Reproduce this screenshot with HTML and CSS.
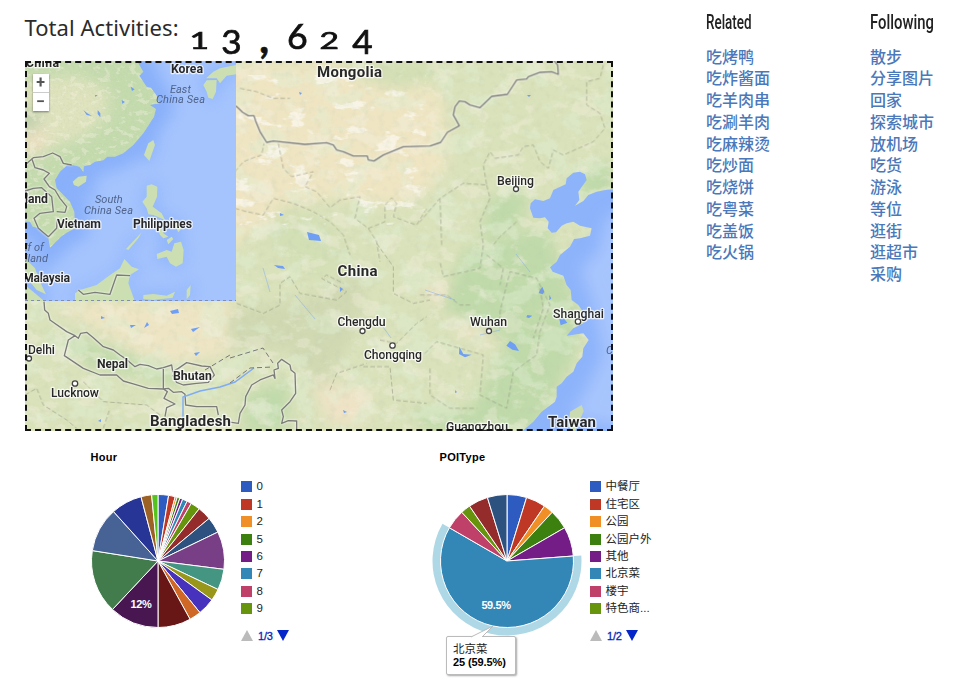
FILE: index.html
```
<!DOCTYPE html>
<html lang="zh">
<head>
<meta charset="utf-8">
<title>Activities</title>
<link rel="stylesheet" href="styles.css">
</head>
<body>
<div class="page">
  <main class="main">
    <header class="total">
      <h1 class="total-label">Total Activities:</h1>
      <div class="counter"><span class="digit one">1</span><span class="digit low">3</span><span class="digit comma">,</span><span class="digit tall">6</span><span class="digit small">2</span><span class="digit low">4</span></div>
    </header>
    <section class="map">
      <svg class="map-svg" viewBox="25 61 588 370" width="588" height="370">
        <defs>
          <filter id="blotch" x="0" y="0" width="100%" height="100%"><feTurbulence type="fractalNoise" baseFrequency=".035 .045" numOctaves="5" seed="8"/><feColorMatrix values="0 0 0 0 .75 0 0 0 0 .86 0 0 0 0 .66 8 0 0 0 -4.2"/></filter>
          <filter id="sand" x="0" y="0" width="100%" height="100%"><feTurbulence type="fractalNoise" baseFrequency=".04 .06" numOctaves="5" seed="21"/><feColorMatrix values="0 0 0 0 .93 0 0 0 0 .89 0 0 0 0 .76 0 9 0 0 -5"/></filter>
          <filter id="pale" x="0" y="0" width="100%" height="100%"><feTurbulence type="fractalNoise" baseFrequency=".035 .07" numOctaves="4" seed="5"/><feColorMatrix values="0 0 0 0 .97 0 0 0 0 .95 0 0 0 0 .88 0 12 0 0 -7.4"/></filter>
          <filter id="relief" x="0" y="0" width="100%" height="100%"><feTurbulence type="fractalNoise" baseFrequency=".14" numOctaves="3" seed="3"/><feColorMatrix values="0 0 0 0 .5 0 0 0 0 .56 0 0 0 0 .4 3 0 0 0 -1.4"/></filter>
          <filter id="soft" x="-20%" y="-20%" width="140%" height="140%"><feGaussianBlur stdDeviation="7"/></filter>
          <filter id="shore" x="-20%" y="-20%" width="140%" height="140%"><feGaussianBlur stdDeviation="22"/></filter>
          <clipPath id="main"><path d="M25 61H613V431H25Z"/></clipPath>
          <clipPath id="inset"><path d="M25 61H236V301H25Z"/></clipPath>
          <path id="mainland" d="M0 0L350 16 370 50 358 62 380 95 393 98 405 115 412 125 417 145 390 150 408 162 402 185 383 215 370 235 340 270 310 295 285 305 262 305 250 316 225 320 210 330 192 334 190 350 178 335 145 327 120 350 105 375 110 400 130 420 150 440 163 470 165 520 140 533 123 545 90 578 85 550 60 520 38 515 30 500 0 500Z"/>
          <path id="isles" d="M158 380L175 365 200 362 198 380 175 395 162 390ZM400 255L405 270 388 318 372 300 385 265ZM380 392L395 388 412 395 411 425 398 455 425 475 435 495 400 480 385 478 380 460 367 440 380 425ZM412 520L425 515 430 535 445 545 430 550 420 540ZM450 500L470 498 485 520 475 532 465 510 455 520ZM440 555L455 545 460 552 445 568ZM410 597L440 585 455 590 463 565 483 560 491 585 488 625 468 635 450 625 440 605 412 612ZM318 582L365 532 355 550 325 585ZM165 715L180 705 230 690 270 660 300 640 313 612 335 635 357 643 330 660 325 685 345 740 165 740ZM15 610L45 640 60 680 78 718 50 705 30 680 15 665ZM15 690L45 715 75 740H15ZM370 720L400 717 440 722 465 710 458 728 400 735 370 732ZM500 705L512 690 510 720 500 733ZM550 90L560 76 590 75 588 110 578 132 565 128 560 110ZM558 70L580 50 600 40 648 30V58L620 62 600 85 590 70Z"/>
        </defs>
        <g clip-path="url(#main)">
          <path fill="#dae2bb" d="M25 61H613V431H25Z"/>
          <g filter="url(#soft)">
            <path fill="#efe5c3" d="M220 61H340L440 90 450 145 440 180 400 205 330 197 290 205 220 255Z"/>
            <path fill="#eee5c4" d="M45 302L236 300 225 330 230 355 160 365 100 330Z"/>
            <path fill="#efe3c6" d="M310 380L370 390 365 425 330 425ZM422 282L455 285 500 330 480 345 440 310Z"/>
            <path fill="#c0daaa" d="M465 250L545 225 580 315 575 355 535 431 430 431 410 410 470 410 510 340 440 310ZM490 200L530 185 520 225 480 240ZM245 395L290 380 285 431 245 431ZM45 330L110 350 180 370 180 385 90 365ZM570 180L613 160V195L585 200Z"/>
            <path fill="#c8cfa9" opacity=".5" d="M230 310L310 300 370 260 355 335 320 390 290 350 230 350Z"/>
            <path fill="#d3dfb5" d="M340 61H430L440 80 400 90 360 80ZM280 205L330 225 350 260 310 280 265 240Z"/>
          </g>
          <rect x="25" y="61" width="588" height="370" filter="url(#blotch)" opacity=".42"/>
          <rect x="25" y="61" width="588" height="370" filter="url(#sand)" opacity=".32"/>
          <rect x="236" y="75" width="190" height="150" filter="url(#pale)" opacity=".7"/>
          <rect x="25" y="61" width="588" height="370" filter="url(#relief)" opacity=".15"/>
          <g transform="translate(420 55) scale(.33333)">
            <path fill="#8db3fb" d="M600 402L560 404 530 410 505 420 490 438 465 452 478 435 475 410 500 375 495 358 480 350 460 353 440 370 437 388 400 405 390 430 370 438 345 433 332 445 330 460 340 488 360 490 375 487 386 500 383 520 395 533 408 532 425 512 440 505 460 500 480 512 515 520 510 542 480 550 462 552 450 575 420 600 410 620 390 637 398 650 430 662 440 690 452 705 455 735 475 750 492 775 490 805 460 820 440 842 470 838 490 835 506 855 490 880 487 905 470 925 460 950 440 965 425 985 410 995 410 1025 405 1040 365 1070 340 1100 305 1130H600Z"/>
            <path fill="#a7c5fd" filter="url(#shore)" d="M640 450L560 490 535 590 480 640 520 750 550 900 500 1000 450 1080 640 1130Z"/>
            <path fill="#cadbb1" d="M485 1050L491 1068 465 1130 445 1115 450 1070Z"/>
            <g fill="#6e9ff5"><path d="M360 705l7-10 6 15-5 8-12-4ZM418 793l12-5 12 15-20 8ZM270 858l15 10 12 20-20-4-18-12ZM322 780l15 2-10 7-8-2ZM118 875l12 22 25 2-20 8-18-10ZM388 720l6 10-6 6ZM105 1005l6 6-5 4Z"/></g>
          </g>
          <g class="borders">
            <path transform="translate(230 55) scale(.33333)" d="M0 142L20 155 38 172 55 182 72 182 77 198 90 230 110 262 130 258 225 268 290 263 310 270 320 285 340 290 370 303 412 303 415 315 432 318 460 300 520 275 600 273 632 262 652 232 688 212 670 180 675 155 688 138 705 140 720 150 750 158 785 124 832 118 860 75 890 72 895 65 930 52 965 50 985 58 983 30 970 15"/>
            <path transform="translate(20 295) scale(.33333)" d="M72 20L74 45 85 55 90 75 140 110 165 122 175 130 182 115 200 112 220 128 250 155 280 165 300 180 315 190 345 215 360 208 385 212 410 222 430 218 455 210 458 230 475 220 500 203 545 213 570 215 583 240 565 262 530 265 490 270 470 262 458 240M165 122L145 135 133 182 190 220 240 240 290 240 310 258 345 268 385 280 430 282 430 222M430 282L445 280 460 292 485 290 495 298 497 330 530 335 590 335 595 360M430 282L442 290 432 310 465 327 440 338 435 365"/>
            <path transform="translate(230 240) scale(.33333)" d="M-10 545L25 550 30 520 45 495 47 470 65 435 90 420 130 405 135 415 132 390 145 385 143 370 155 358 180 375 183 390 195 400 197 460 180 485 155 510 160 530 155 550 175 542 200 543 200 570"/>
          </g>
          <g class="provinces">
            <path transform="translate(230 55) scale(.33333)" d="M15 350L40 320 70 308 95 300 102 265M145 265L160 340 185 365 250 350 225 395 260 410 300 458 330 435 390 425 375 490 415 520 440 510 465 500 465 450 485 428 500 445 490 485 530 500 560 510 590 460M15 460L50 470 100 480 130 430 190 445 250 470 300 500 340 540 360 600M30 100L80 110 130 130 180 130M415 520L440 560 450 620"/>
            <path transform="translate(420 55) scale(.33333)" d="M550 30L540 70 500 80 500 150 540 175 555 220 520 260 430 300 400 285 385 340 360 320 340 270 310 275 295 300 225 310 210 290 190 330 200 390 130 385 60 430 0 500M60 430L65 570M200 390L210 430 180 500 190 570 180 640 70 665 60 620M290 500L240 545 220 570M200 600L250 640 240 690M240 820L240 770 270 650 350 670 390 750 360 830 350 900 280 950 260 1060 180 1020 190 900 50 860 10 900M0 720L80 720 120 750 150 750M30 940L30 1020 90 1060 170 1060M360 700L370 760 340 850"/>
            <path transform="translate(230 240) scale(.33333)" d="M20 190L100 220 150 195 150 130 180 110 210 160 320 180 350 155 275 115 290 105 340 130M440 10L490 80 490 160 550 190 600 180M400 380L480 380 490 480 590 490M300 450L320 400 410 370M450 300L500 310 560 250 590 230"/>
            <path transform="translate(20 295) scale(.33333)" d="M15 300L50 280 70 330 140 375 170 400M190 260L250 320 380 330 420 360M250 400L270 340"/>
          </g>
          <path class="river" d="M183 420V397L200 391 220 387 235 382 254 368"/>
          <path class="river thin" d="M263 268L270 292M295 295L315 319M378 320L391 338M516 254L530 272M425 290L455 300M480 335L500 330"/>
          <path fill="#6e9ff5" d="M307 232l12 3 2 6-12-1ZM274 265l9 1 2 3-7-1ZM280 213l4 2-4 1ZM299 92l3 1-2 2ZM101 316l4 2-4 1ZM130 325l6 0-5 3ZM147 322l2 3-5 3ZM170 311l8-2 1 4-7 1ZM191 329l9-2-7 5ZM194 353l6-1-4 4ZM98 421l3-2v3ZM343 410l4 2-3 1ZM340 287l3 2-3 3ZM527 95l4 0-2 2Z"/>
          <path class="disputed" d="M230 358L263 348 273 363M230 383L250 368 273 367M205 370L230 355"/>
        </g>
        <g clip-path="url(#inset)">
          <path fill="#a5c4fd" d="M25 61H236V301H25Z"/>
          <g transform="translate(20 55) scale(.33333)">
            <g fill="none" stroke="#82abf9" stroke-width="80" opacity=".8" filter="url(#shore)"><use href="#mainland"/><use href="#isles" stroke-width="14"/></g>
            <use href="#mainland" fill="#c4dbae"/><use href="#isles" fill="#cbdfb3"/>
            <clipPath id="landclip"><use href="#mainland"/></clipPath>
            <g clip-path="url(#landclip)">
              <g filter="url(#shore)"><path fill="#dfe3be" d="M0 80L170 60 270 110 260 190 180 250 90 280 0 290Z"/><path fill="#efe1c4" d="M10 240L75 220 85 270 45 310 0 290Z"/><path fill="#bbcdaa" d="M0 170L60 160 60 215 0 230Z"/></g>
              <rect width="650" height="600" filter="url(#sand)" opacity=".35"/><rect width="650" height="600" filter="url(#relief)" opacity=".14"/>
              <path fill="#6e9ff5" d="M190 165l12 10 14 8-16-3ZM233 165l8 10 0 12-8-10ZM305 135l10 6-8 5ZM332 95l12 8-8 5ZM225 120l8 0-7 6Z"/>
            </g>
          </g>
          <g class="borders"><path transform="translate(20 55) scale(.33333)" d="M15 330L40 308 70 305 98 294 120 305 130 325 155 330M35 310L45 338 70 345 88 355 72 372 88 395 105 405 120 430 140 455 135 472 110 470M15 408L40 400 65 398 95 425 100 470 60 475 42 490 55 520 85 545 110 520 112 490M175 705L190 718 225 712 270 718 290 660 330 662"/></g>
        </g>
        <path d="M25 300.500H236" stroke="#858bab" stroke-dasharray="3 3"/>
        <g class="labels">
          <g class="country">
            <text x="26" y="66.500" textLength="33">China</text><text x="171" y="73" textLength="32">Korea</text>
            <text x="317" y="76.500" textLength="65" class="large">Mongolia</text><text x="337.500" y="276" textLength="40" class="large">China</text>
            <text x="25" y="202.500" textLength="23">land</text><text x="57" y="228" textLength="44">Vietnam</text><text x="133" y="228" textLength="59">Philippines</text><text x="23" y="282" textLength="47">Malaysia</text>
            <text x="97" y="368" textLength="31">Nepal</text><text x="173" y="380" textLength="39">Bhutan</text>
            <text x="150" y="425.500" textLength="81" class="large">Bangladesh</text><text x="548" y="426.500" textLength="48" class="large">Taiwan</text>
          </g>
          <g class="city">
            <text x="497" y="184.500" textLength="37">Beijing</text><text x="337.500" y="326" textLength="48">Chengdu</text><text x="364" y="359" textLength="58">Chongqing</text>
            <text x="470" y="326" textLength="37">Wuhan</text><text x="553" y="318" textLength="51">Shanghai</text><text x="446" y="431" textLength="62">Guangzhou</text>
            <text x="28" y="354" textLength="27">Delhi</text><text x="51" y="397" textLength="48">Lucknow</text>
          </g>
          <g class="sea"><text x="170" y="92.500">East</text><text x="156" y="102.500" textLength="49">China Sea</text><text x="95" y="203">South</text><text x="84" y="214" textLength="49">China Sea</text><text x="25" y="251">lf of</text><text x="25" y="261.500">iland</text><text x="606" y="354">C</text></g>
          <g class="dots"><circle cx="516" cy="189" r="2.500"/><circle cx="362.500" cy="331" r="2.500"/><circle cx="392.500" cy="345.500" r="2.700"/><circle cx="489" cy="331" r="2.500"/><circle cx="578" cy="321.500" r="2.700"/><circle cx="29" cy="358.500" r="2.500"/><circle cx="75" cy="383.500" r="2.700"/></g>
        </g>
      </svg>
      <div class="zoom"><button class="zoom-btn">+</button><button class="zoom-btn">−</button></div>
    </section>
    <section class="charts">
      <div class="chart">
        <h2 class="chart-title">Hour</h2>
        <div class="chart-body"><svg class="pie" data-pie="hour" viewBox="-80 -80 160 160" width="160" height="160"></svg>
          <div class="legend"><ul class="legend-list" data-legend="hour"></ul><div class="pager"><i class="up"></i><span>1/3</span><i class="down"></i></div></div></div>
      </div>
      <div class="chart">
        <h2 class="chart-title">POIType</h2>
        <div class="chart-body"><svg class="pie" data-pie="poi" viewBox="-80 -80 160 160" width="160" height="160"></svg>
          <div class="legend"><ul class="legend-list" data-legend="poi"></ul><div class="pager"><i class="up"></i><span>1/2</span><i class="down"></i></div></div>
          <div class="tooltip"><svg class="tail" viewBox="0 0 24 13" width="24" height="13"><path d="M1 12L23 1 12 12" fill="#fff" stroke="#bbb"/></svg>北京菜<b>25 (59.5%)</b></div></div>
      </div>
    </section>
  </main>
  <aside class="side">
    <section class="list"><h2 class="list-title related">Related</h2><a>吃烤鸭</a><a>吃炸酱面</a><a>吃羊肉串</a><a>吃涮羊肉</a><a>吃麻辣烫</a><a>吃炒面</a><a>吃烧饼</a><a>吃粤菜</a><a>吃盖饭</a><a>吃火锅</a></section>
    <section class="list"><h2 class="list-title following">Following</h2><a>散步</a><a>分享图片</a><a>回家</a><a>探索城市</a><a>放机场</a><a>吃货</a><a>游泳</a><a>等位</a><a>逛街</a><a>逛超市</a><a>采购</a></section>
  </aside>
</div>
<script src="charts.js"></script>
</body>
</html>
```

FILE: styles.css
```
* { box-sizing: border-box; }
body { margin: 0; background: #fff; color: #222; font-family: Roboto, "Noto Sans CJK SC", sans-serif; }
.page { display: flex; width: 964px; height: 684px; overflow: hidden; }
.main { flex: none; width: 681px; padding-left: 24.500px; }
.total { display: flex; height: 61px; }
.total-label { margin: 13px 0 0; width: 158px; font: 400 22px/28px "Noto Sans", sans-serif; letter-spacing: .05px; white-space: nowrap; color: #2b2b2b; }
.counter { display: flex; padding-top: 9px; }
.digit { width: 32.700px; text-align: center; font: 400 34px/44px Lato, sans-serif; color: #111; -webkit-text-stroke: .7px #111; }
.small, .one { font-size: 24px; line-height: 61px; transform: scaleX(1.4); }
.low { font-size: 32px; line-height: 66px; transform: scaleX(1.100); }
.tall { line-height: 54px; transform: scaleX(1.050); }
.comma { font-weight: 700; line-height: 57px; font-size: 42px; }
.map { position: relative; width: 588px; height: 370px; }
.map-svg { display: block; }
.map::after { content: ""; position: absolute; inset: 0; border: 2px dashed #111; }
.borders { fill: none; stroke: #7c7c78; stroke-width: 4; stroke-linejoin: round; filter: drop-shadow(0 0 1px #fff); }
.provinces { fill: none; stroke: #8f927f; stroke-width: 2.800; stroke-dasharray: 14 7; opacity: .6; stroke-linejoin: round; }
.river { fill: none; stroke: #7fabf3; stroke-width: 1.400; }
.thin { stroke-width: .8; opacity: .6; }
.disputed { fill: none; stroke: #777; stroke-dasharray: 5 3; }
.labels { font-family: Roboto, sans-serif; font-size: 12.300px; }
.labels text { paint-order: stroke; stroke: #fff; stroke-opacity: .75; stroke-width: 2.500px; stroke-linejoin: round; fill: #282828; }
.country { font-weight: 700; }
.country .large { font-size: 15px; }
.city { font-weight: 500; }
.sea { font-style: italic; font-size: 11px; }
.labels .sea text { fill: #50648b; stroke: none; }
.dots { fill: #fff; stroke: #444; stroke-width: 1.300; }
.zoom { position: absolute; left: 8px; top: 13px; display: grid; gap: 1px; width: 16px; background: #ccc; box-shadow: 0 1px 2px rgba(0,0,0,.45); }
.zoom-btn { display: block; height: 18px; padding: 0; border: 0; background: #fff; color: #555; font: 700 16px/18px Roboto, sans-serif; }
.charts { display: flex; padding-top: 19px; }
.chart { flex: none; width: 349px; }
.chart-title { margin: 0 0 0 66px; font: 700 11px/14px "Liberation Sans", Arial, sans-serif; letter-spacing: .3px; color: #000; }
.chart-body { position: relative; display: flex; padding-left: 53px; padding-top: 14px; }
.pie { margin-top: 3px; display: block; flex: none; }
.pie text { font: 700 11px "Liberation Sans", Arial, sans-serif; fill: #fff; letter-spacing: -.4px; text-anchor: middle; }
.legend { margin-left: 3.500px; }
.legend-list { list-style: none; margin: 0; padding: 0; }
.legend-item { display: flex; align-items: center; gap: 4.500px; height: 17.450px; font: 11.500px/17px "Liberation Sans", "Noto Sans CJK SC", sans-serif; color: #222; white-space: nowrap; }
.swatch { width: 11px; height: 11px; }
.pager { display: flex; align-items: center; margin-top: 11px; height: 14px; gap: 4px; font: 11px/14px "Liberation Sans", sans-serif; color: #0526b8; }
.pager span { margin-left: 1px; letter-spacing: -.2px; -webkit-text-stroke: .3px; }
.up, .down { width: 0; border: 6px solid transparent; }
.up { border-top: 0; border-bottom: 11px solid #bbb; }
.down { border-bottom: 0; border-top: 11px solid #0526c8; }
.tooltip { position: absolute; left: 72.500px; top: 172px; width: 70px; height: 39px; padding: 5px 0 0 6px; border: 1px solid #bbb; border-radius: 2px; background: #fff; box-shadow: 1px 1px 2px rgba(0,0,0,.35); font: 11.500px/14px "Liberation Sans", "Noto Sans CJK SC", sans-serif; color: #222; }
.tooltip b { display: block; font-size: 11px; line-height: 13px; color: #000; letter-spacing: -.1px; white-space: nowrap; }
.tail { position: absolute; left: 23px; top: -12px; }
.side { display: flex; flex: none; padding-left: 25px; }
.list { flex: none; width: 164px; }
.list-title { margin: 11px 0 11.500px; width: max-content; font: 500 19.500px/23px Roboto, sans-serif; color: #222; transform-origin: 0 50%; }
.related { transform: scaleX(.69); }
.following { transform: scaleX(.76); }
.list a { display: block; font: 500 16px/21.750px "Noto Sans CJK SC", sans-serif; color: #4a78ba; }
```

FILE: charts.js
```
const colors = ["#2d5bbf", "#bf3826", "#f08f26", "#3c8010", "#751d87", "#3287b7", "#bf4069", "#66940d"];
const charts = {
  hour: {
    radius: 66.5,
    ends: [9.2, 15, 16.800, 19.200, 21.800, 26, 30, 38.3, 50.2, 64.2, 97.2, 115.4, 125.9, 140.9, 151.2, 180, 223.2, 279, 318, 345.2, 354.5, 360],
    colors: [...colors, "#942c2c", "#2d5280", "#783f87", "#459583", "#99961c", "#4632bd", "#cf6826", "#691616", "#481752", "#427c4c", "#476294", "#273596", "#9c6125", "#56c21d"],
    legend: ["0", "1", "2", "5", "6", "7", "8", "9"],
    label: ["12%", -17, 46.5]
  },
  poi: {
    radius: 66.5,
    ends: [2, 4, 5, 7, 10, 35, 37, 38, 40, 42].map(n => n * 360 / 42),
    colors: [...colors, "#942c2c", "#2d5280"],
    legend: ["中餐厅", "住宅区", "公园", "公园户外", "其他", "北京菜", "楼宇", "特色商..."],
    label: ["59.5%", -11, 47.5],
    active: 5
  }
};
const wedge = (from, to, r) => {
  const at = d => [Math.sin(d * Math.PI / 180) * r, -Math.cos(d * Math.PI / 180) * r].join(" ");
  return `M0 0L${at(from)}A${r} ${r} 0 ${to - from > 180 ? 1 : 0} 1 ${at(to)}Z`;
};
for (const [name, c] of Object.entries(charts)) {
  let svg = "";
  if (c.active) {
    svg += `<path d="${wedge(c.ends[c.active - 1], c.ends[c.active], 74.5)}" fill="#afd8e6"/>`;
  }
  c.ends.forEach((end, i) => {
    svg += `<path d="${wedge(c.ends[i - 1] || 0, end, c.radius)}" fill="${c.colors[i]}" stroke="#fff" stroke-width="1"/>`;
  });
  svg += `<text x="${c.label[1]}" y="${c.label[2]}">${c.label[0]}</text>`;
  document.querySelector(`[data-pie=${name}]`).innerHTML = svg;
  document.querySelector(`[data-legend=${name}]`).innerHTML = c.legend.map((t, i) =>
    `<li class="legend-item"><i class="swatch" style="background:${colors[i]}"></i>${t}</li>`).join("");
}
```
